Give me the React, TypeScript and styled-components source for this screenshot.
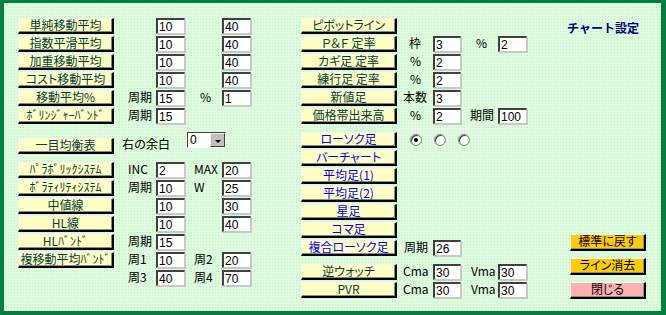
import styled, { createGlobalStyle } from "styled-components";

const GlobalStyle = createGlobalStyle`
  * {
    box-sizing: border-box;
  }
  body {
    margin: 0;
    font-family: "Noto Sans CJK JP", "Liberation Sans", sans-serif;
  }
`;

const JP = `"Noto Sans CJK JP", "Liberation Sans", sans-serif`;

const Frame = styled.div`
  width: 666px;
  height: 315px;
  border-style: solid;
  border-color: #008040;
  border-width: 3px 5px 4px 4px;
  background-color: #ddfbdd;
  background-image: radial-gradient(#cdeccd 0.6px, transparent 0.7px);
  background-size: 3px 3px;
  display: flex;
  padding: 15px 0 0 14px;
  font-family: ${JP};
  font-size: 12px;
`;

const Column = styled.div<{ $width: number; $left?: number }>`
  width: ${(p) => p.$width}px;
  margin-left: ${(p) => p.$left ?? 0}px;
  display: flex;
  flex-direction: column;
`;

const Row = styled.div<{ $cols: string; $top?: number }>`
  display: grid;
  grid-template-columns: ${(p) => p.$cols};
  align-items: center;
  height: 16px;
  margin-top: ${(p) => p.$top ?? 2}px;
`;

const LEFT_COLS = "110px 28px 29px 37px 29px";
const MID_COLS = "96px 36px 28px 37px 29px";

const Btn = styled.button<{ $color?: string; $bg?: string; $w?: number; $h?: number; $end?: boolean }>`
  width: ${(p) => p.$w ?? 96}px;
  height: ${(p) => p.$h ?? 16}px;
  padding: 0 0 2px 0;
  margin: 0;
  background: ${(p) => p.$bg ?? "#ffffc4"};
  color: ${(p) => p.$color ?? "#004040"};
  font-family: ${JP};
  font-size: 12px;
  font-feature-settings: "palt";
  line-height: 1;
  white-space: nowrap;
  border-style: solid;
  border-width: 1px 2px 2px 1px;
  border-color: #f4f4f4 #000 #000 #f4f4f4;
  box-shadow: inset -1px -1px 0 #8a8a7a;
  grid-column: 1;
  justify-self: start;
  align-self: ${(p) => (p.$end ? "flex-end" : "auto")};
  cursor: default;
`;

const Label = styled.span<{ $indent?: number; $col?: number }>`
  grid-column: ${(p) => p.$col ?? "auto"};
  padding-left: ${(p) => p.$indent ?? 0}px;
  color: #000;
  line-height: 1;
  white-space: nowrap;
  margin-top: -3px;
`;

const Field = styled.input<{ $col?: number }>`
  grid-column: ${(p) => p.$col ?? "auto"};
  width: 100%;
  height: 16px;
  margin: 0;
  padding: 0 0 0 1px;
  background: #fff;
  border-style: solid;
  border-width: 2px 1px 1px 2px;
  border-color: #404040 #c8c8c8 #c8c8c8 #404040;
  box-shadow: 1px 1px 0 #c8c8c8;
  font-family: "Liberation Sans", sans-serif;
  font-size: 12px;
  color: #000;
  outline: none;
`;

const IchimokuRow = styled.div`
  display: flex;
  align-items: center;
  height: 22px;
  margin-top: 8px;
`;

const IchiLabel = styled.span`
  margin-left: 8px;
  width: 65px;
  line-height: 1;
  margin-top: 1px;
`;

const SelectBox = styled.div`
  align-self: flex-start;
  width: 39px;
  height: 16px;
  background: #fff;
  border-style: solid;
  border-width: 1px;
  border-color: #404040 #fff #fff #404040;
  display: flex;
  align-items: stretch;
  font-family: "Liberation Sans", sans-serif;
  font-size: 12px;
`;

const SelectValue = styled.span`
  flex: 1;
  padding-left: 2px;
  line-height: 14px;
`;

const SelectArrow = styled.span`
  width: 15px;
  background: #c0c0c0;
  border-style: solid;
  border-width: 1px;
  border-color: #f0f0f0 #404040 #404040 #f0f0f0;
  display: flex;
  align-items: center;
  justify-content: center;
  &::after {
    content: "";
    border-left: 3px solid transparent;
    border-right: 3px solid transparent;
    border-top: 3px solid #000;
    margin-top: 2px;
  }
`;

const RadioGroup = styled.div`
  grid-column: 2 / span 4;
  display: flex;
  gap: 12px;
  padding-left: 13px;
`;

const Radio = styled.span<{ $checked?: boolean }>`
  width: 12px;
  height: 12px;
  border-radius: 50%;
  background: #fff;
  border: 1px solid #808080;
  box-shadow: inset 1px 1px 0 #404040;
  display: flex;
  align-items: center;
  justify-content: center;
  &::after {
    content: "";
    width: 4px;
    height: 4px;
    border-radius: 50%;
    background: ${(p) => (p.$checked ? "#000" : "transparent")};
  }
`;

const Title = styled.div`
  margin-top: 4px;
  color: #000080;
  font-weight: bold;
  font-size: 12px;
  line-height: 1;
  white-space: nowrap;
`;

const ActionGroup = styled.div`
  margin-top: auto;
  margin-bottom: 12px;
  margin-left: 3px;
  display: flex;
  flex-direction: column;
  gap: 7px;
`;

type Cell = { label?: string; indent?: number; value?: string };

interface IRow {
  btn?: string;
  color?: string;
  top?: number;
  a?: Cell;
  b?: Cell;
}

const leftRows: IRow[] = [
  { btn: "単純移動平均", top: 0, a: { value: "10" }, b: { value: "40" } },
  { btn: "指数平滑平均", a: { value: "10" }, b: { value: "40" } },
  { btn: "加重移動平均", a: { value: "10" }, b: { value: "40" } },
  { btn: "コスト移動平均", a: { value: "10" }, b: { value: "40" } },
  { btn: "移動平均%", a: { label: "周期", value: "15" }, b: { label: "%", indent: 15, value: "1" } },
  { btn: "ﾎﾞﾘﾝｼﾞｬｰﾊﾞﾝﾄﾞ", a: { label: "周期", value: "15" } },
];

const leftRows2: IRow[] = [
  { btn: "ﾊﾟﾗﾎﾞﾘｯｸｼｽﾃﾑ", top: 8, a: { label: "INC", value: "2" }, b: { label: "MAX", indent: 9, value: "20" } },
  { btn: "ﾎﾞﾗﾃｨﾘﾃｨｼｽﾃﾑ", a: { label: "周期", value: "10" }, b: { label: "W", indent: 9, value: "25" } },
  { btn: "中値線", a: { value: "10" }, b: { value: "30" } },
  { btn: "HL線", a: { value: "10" }, b: { value: "40" } },
  { btn: "HLﾊﾞﾝﾄﾞ", a: { label: "周期", value: "15" } },
  { btn: "複移動平均ﾊﾞﾝﾄﾞ", a: { label: "周1", value: "10" }, b: { label: "周2", indent: 9, value: "20" } },
  { a: { label: "周3", value: "40" }, b: { label: "周4", indent: 9, value: "70" } },
];

const BLUE = "#0000ff";

const midRows: IRow[] = [
  { btn: "ピボットライン", top: 0 },
  { btn: "Ｐ＆Ｆ 定率", a: { label: "枠", indent: 12, value: "3" }, b: { label: "%", indent: 15, value: "2" } },
  { btn: "カギ足 定率", a: { label: "%", indent: 13, value: "2" } },
  { btn: "練行足 定率", a: { label: "%", indent: 13, value: "2" } },
  { btn: "新値足", a: { label: "本数", indent: 6, value: "3" } },
  { btn: "価格帯出来高", a: { label: "%", indent: 13, value: "2" }, b: { label: "期間", indent: 9, value: "100" } },
];

const midRows2: IRow[] = [
  { btn: "バーチャート", color: BLUE },
  { btn: "平均足(1)", color: BLUE },
  { btn: "平均足(2)", color: BLUE },
  { btn: "星足", color: BLUE },
  { btn: "コマ足", color: BLUE },
  { btn: "複合ローソク足", color: BLUE, a: { label: "周期", indent: 7, value: "26" } },
  { btn: "逆ウォッチ", top: 8, a: { label: "Cma", indent: 6, value: "30" }, b: { label: "Vma", indent: 10, value: "30" } },
  { btn: "PVR", a: { label: "Cma", indent: 6, value: "30" }, b: { label: "Vma", indent: 10, value: "30" } },
];

function SettingRow({ row, cols }: { row: IRow; cols: string }) {
  return (
    <Row $cols={cols} $top={row.top}>
      {row.btn && <Btn $color={row.color}>{row.btn}</Btn>}
      {row.a?.label && (
        <Label $col={2} $indent={row.a.indent}>
          {row.a.label}
        </Label>
      )}
      {row.a?.value && <Field $col={3} readOnly value={row.a.value} />}
      {row.b?.label && (
        <Label $col={4} $indent={row.b.indent}>
          {row.b.label}
        </Label>
      )}
      {row.b?.value && <Field $col={5} readOnly value={row.b.value} />}
    </Row>
  );
}

export default function App() {
  return (
    <>
      <GlobalStyle />
      <Frame>
        <Column $width={233}>
          {leftRows.map((r, i) => (
            <SettingRow key={i} row={r} cols={LEFT_COLS} />
          ))}
          <IchimokuRow>
            <Btn $end>一目均衡表</Btn>
            <IchiLabel>右の余白</IchiLabel>
            <SelectBox>
              <SelectValue>0</SelectValue>
              <SelectArrow />
            </SelectBox>
          </IchimokuRow>
          {leftRows2.map((r, i) => (
            <SettingRow key={i} row={r} cols={LEFT_COLS} />
          ))}
        </Column>

        <Column $width={226} $left={50}>
          {midRows.map((r, i) => (
            <SettingRow key={i} row={r} cols={MID_COLS} />
          ))}
          <Row $cols={MID_COLS} $top={8}>
            <Btn $color={BLUE}>ローソク足</Btn>
            <RadioGroup>
              <Radio $checked />
              <Radio />
              <Radio />
            </RadioGroup>
          </Row>
          {midRows2.map((r, i) => (
            <SettingRow key={i} row={r} cols={MID_COLS} />
          ))}
        </Column>

        <Column $width={80} $left={40}>
          <Title>チャート設定</Title>
          <ActionGroup>
            <Btn $color="#000" $bg="#ffcc00" $w={76} $h={17}>
              標準に戻す
            </Btn>
            <Btn $color="#000" $bg="#ffcc00" $w={76} $h={17}>
              ライン消去
            </Btn>
            <Btn $color="#000" $bg="#ffb0b0" $w={76} $h={17}>
              閉じる
            </Btn>
          </ActionGroup>
        </Column>
      </Frame>
    </>
  );
}
